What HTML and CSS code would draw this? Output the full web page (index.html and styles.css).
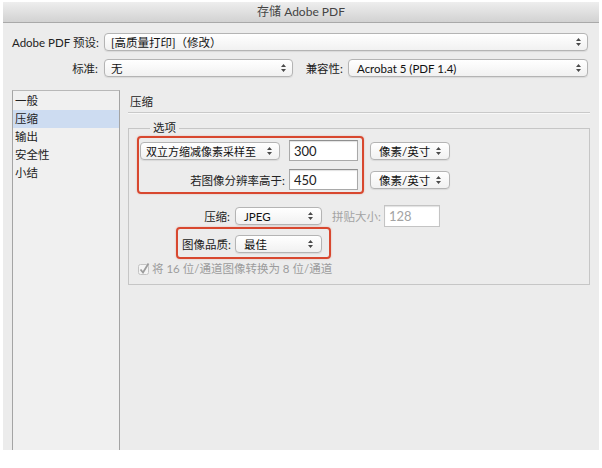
FILE: index.html
```html
<!DOCTYPE html>
<html lang="zh-CN">
<head>
    <meta charset="UTF-8">
    <title>存储 Adobe PDF</title>
    <link rel="stylesheet" href="styles.css">
</head>
<body>
    <div class="window">
        <div class="titlebar">存储 Adobe PDF</div>

        <div class="top">
            <div class="row">
                <label class="lbl lbl-main">Adobe PDF 预设:</label>
                <div class="popup popup-preset">
                    <span>[高质量打印]（修改）</span>
                    <svg class="arrows" width="7" height="10" viewBox="0 0 7 10"><path d="M1 4 L3.5 1 L6 4Z M1 6 L3.5 9 L6 6Z"/></svg>
                </div>
            </div>
            <div class="row">
                <label class="lbl lbl-main">标准:</label>
                <div class="popup popup-std">
                    <span>无</span>
                    <svg class="arrows" width="7" height="10" viewBox="0 0 7 10"><path d="M1 4 L3.5 1 L6 4Z M1 6 L3.5 9 L6 6Z"/></svg>
                </div>
                <label class="lbl lbl-compat">兼容性:</label>
                <div class="popup popup-compat">
                    <span>Acrobat 5 (PDF 1.4)</span>
                    <svg class="arrows" width="7" height="10" viewBox="0 0 7 10"><path d="M1 4 L3.5 1 L6 4Z M1 6 L3.5 9 L6 6Z"/></svg>
                </div>
            </div>
        </div>

        <div class="main">
            <ul class="sidebar">
                <li>一般</li>
                <li class="active">压缩</li>
                <li>输出</li>
                <li>安全性</li>
                <li>小结</li>
            </ul>

            <div class="panel">
                <div class="panel-title">压缩</div>

                <fieldset class="group">
                    <legend>选项</legend>

                    <div class="sample">
                        <div class="highlight hl-sample">
                            <div class="srow">
                                <div class="scol">
                                    <div class="popup popup-method">
                                        <span>双立方缩减像素采样至</span>
                                        <svg class="arrows" width="7" height="10" viewBox="0 0 7 10"><path d="M1 4 L3.5 1 L6 4Z M1 6 L3.5 9 L6 6Z"/></svg>
                                    </div>
                                </div>
                                <div class="field field-res">300</div>
                            </div>
                            <div class="srow">
                                <div class="scol slbl">若图像分辨率高于:</div>
                                <div class="field field-res">450</div>
                            </div>
                        </div>
                        <div class="units">
                            <div class="urow">
                                <div class="popup popup-unit">
                                    <span>像素/英寸</span>
                                    <svg class="arrows" width="7" height="10" viewBox="0 0 7 10"><path d="M1 4 L3.5 1 L6 4Z M1 6 L3.5 9 L6 6Z"/></svg>
                                </div>
                            </div>
                            <div class="urow">
                                <div class="popup popup-unit">
                                    <span>像素/英寸</span>
                                    <svg class="arrows" width="7" height="10" viewBox="0 0 7 10"><path d="M1 4 L3.5 1 L6 4Z M1 6 L3.5 9 L6 6Z"/></svg>
                                </div>
                            </div>
                        </div>
                    </div>

                    <div class="crow">
                        <span class="clbl">压缩:</span>
                        <div class="popup popup-comp">
                            <span>JPEG</span>
                            <svg class="arrows" width="7" height="10" viewBox="0 0 7 10"><path d="M1 4 L3.5 1 L6 4Z M1 6 L3.5 9 L6 6Z"/></svg>
                        </div>
                        <span class="tile-lbl">拼贴大小:</span>
                        <div class="field field-tile">128</div>
                    </div>

                    <div class="highlight hl-quality">
                        <span class="qlbl">图像品质:</span>
                        <div class="popup popup-comp">
                            <span>最佳</span>
                            <svg class="arrows" width="7" height="10" viewBox="0 0 7 10"><path d="M1 4 L3.5 1 L6 4Z M1 6 L3.5 9 L6 6Z"/></svg>
                        </div>
                    </div>

                    <div class="check">
                        <svg width="13" height="13" viewBox="0 0 13 13">
                            <rect x="1.5" y="2.5" width="10" height="10" rx="2" fill="#f4f4f4" stroke="#c4c4c4"/>
                            <path d="M3.5 7.5 L6 10.5 L11.5 1.5" fill="none" stroke="#9c9c9c" stroke-width="1.8"/>
                        </svg>
                        <span>将 16 位/通道图像转换为 8 位/通道</span>
                    </div>
                </fieldset>
            </div>
        </div>
    </div>
</body>
</html>
```

FILE: styles.css
```css
body {
    margin: 0;
    background: #fff;
    font-family: Lato, "Noto Sans CJK SC", sans-serif;
    font-size: 11.5px;
    color: #222;
}
.window {
    margin: 2px 3px 0 3px;
    height: 448px;
    background: #ececec;
    display: flex;
    flex-direction: column;
}
.titlebar {
    height: 20px;
    line-height: 20px;
    text-align: center;
    font-size: 12px;
    color: #444;
    background: linear-gradient(#eeeeee, #d2d2d2);
    border-bottom: 1px solid #a9a9a9;
}
.top {
    padding: 10px 11px 0 9px;
}
.row {
    display: flex;
    align-items: center;
    height: 18px;
    margin-bottom: 8px;
}
.lbl {
    text-align: right;
    padding-right: 6px;
    box-sizing: border-box;
    white-space: nowrap;
}
.lbl-main {
    width: 92px;
}
.lbl-compat {
    width: 55px;
    padding-right: 5px;
}

/* mac style popup buttons */
.popup {
    height: 18px;
    box-sizing: border-box;
    display: flex;
    align-items: center;
    justify-content: space-between;
    padding: 0 5px 0 6px;
    background: linear-gradient(#ffffff, #f1f1f1);
    border: 1px solid #b4b4b4;
    border-radius: 4px;
    box-shadow: 0 1px 1px rgba(0,0,0,0.08);
    white-space: nowrap;
    color: #111;
}
.arrows {
    fill: #4a4a4a;
    flex-shrink: 0;
}
.popup-preset { width: 484px; }
.popup-std { width: 189px; }
.popup-compat { width: 240px; padding-left: 8px; }
.popup-method { width: 140px; padding: 0 6px 0 5px; font-size: 11px; }
.popup-unit { width: 80px; padding-left: 8px; padding-right: 7px; }
.popup-comp { width: 87px; padding-left: 8px; padding-right: 7px; }

.main {
    flex: 1;
    display: flex;
    padding: 5px 9px 0 9px;
}
.sidebar {
    list-style: none;
    margin: 0;
    padding: 1px 0 0 0;
    width: 108px;
    box-sizing: border-box;
    background: #f0f0f0;
    border: 1px solid #b8b8b8;
    border-left-color: #a4a4a4;
    border-right-color: #a4a4a4;
    border-bottom: none;
}
.sidebar li {
    height: 18px;
    line-height: 18px;
    padding-left: 2px;
}
.sidebar li.active {
    background: #cddcf1;
}
.panel {
    flex: 1;
    margin-left: 8px;
}
.panel-title {
    padding: 4px 2px 3px;
    line-height: 15px;
    border-bottom: 1px solid #c9c9c9;
    box-shadow: 0 1px 0 #f8f8f8;
}
.group {
    margin: 7px 0 0 0;
    padding: 0 8px 8px 8px;
    border: 1px solid #c6c6c6;
}
.group legend {
    margin-left: 13px;
    padding: 0 3px;
    line-height: 16px;
}
.highlight {
    border: 2px solid #d8482f;
    border-radius: 4px;
    box-shadow: 0 0 2px rgba(216,72,47,0.35);
}
.sample {
    display: flex;
}
.hl-sample {
    width: 227px;
    box-sizing: border-box;
    padding: 2px 4px 2px 1px;
}
.srow {
    display: flex;
    align-items: center;
    height: 21px;
}
.srow + .srow {
    margin-top: 8px;
}
.scol {
    width: 149px;
}
.slbl {
    text-align: right;
    padding-right: 4px;
    box-sizing: border-box;
}
.field {
    box-sizing: border-box;
    background: #fff;
    border: 1px solid #a9a9a9;
    border-top-color: #8f8f8f;
    box-shadow: inset 0 1px 1px rgba(0,0,0,0.12);
    padding-left: 4px;
    display: flex;
    align-items: center;
}
.field-res {
    width: 69px;
    height: 21px;
    font-size: 13px;
}
.units {
    margin-left: 6px;
    padding-top: 4px;
}
.urow {
    height: 21px;
    display: flex;
    align-items: center;
}
.urow + .urow {
    margin-top: 8px;
}
.crow {
    display: flex;
    align-items: center;
    height: 22px;
    margin-top: 11px;
}
.clbl {
    width: 98px;
    text-align: right;
    padding-right: 5px;
    box-sizing: border-box;
}
.tile-lbl {
    color: #a3a3a3;
    margin-left: 10px;
    width: 52px;
}
.field-tile {
    width: 56px;
    height: 22px;
    color: #a3a3a3;
    border-color: #c4c4c4;
    font-size: 13px;
}
.hl-quality {
    display: flex;
    align-items: center;
    width: 155px;
    box-sizing: border-box;
    margin-left: 39px;
    padding: 6px 7px 4px 4px;
}
.qlbl {
    width: 53px;
}
.check {
    display: flex;
    align-items: center;
    height: 16px;
    margin-top: 1px;
    color: #9c9c9c;
}
.check svg {
    margin-right: 2px;
}
```
